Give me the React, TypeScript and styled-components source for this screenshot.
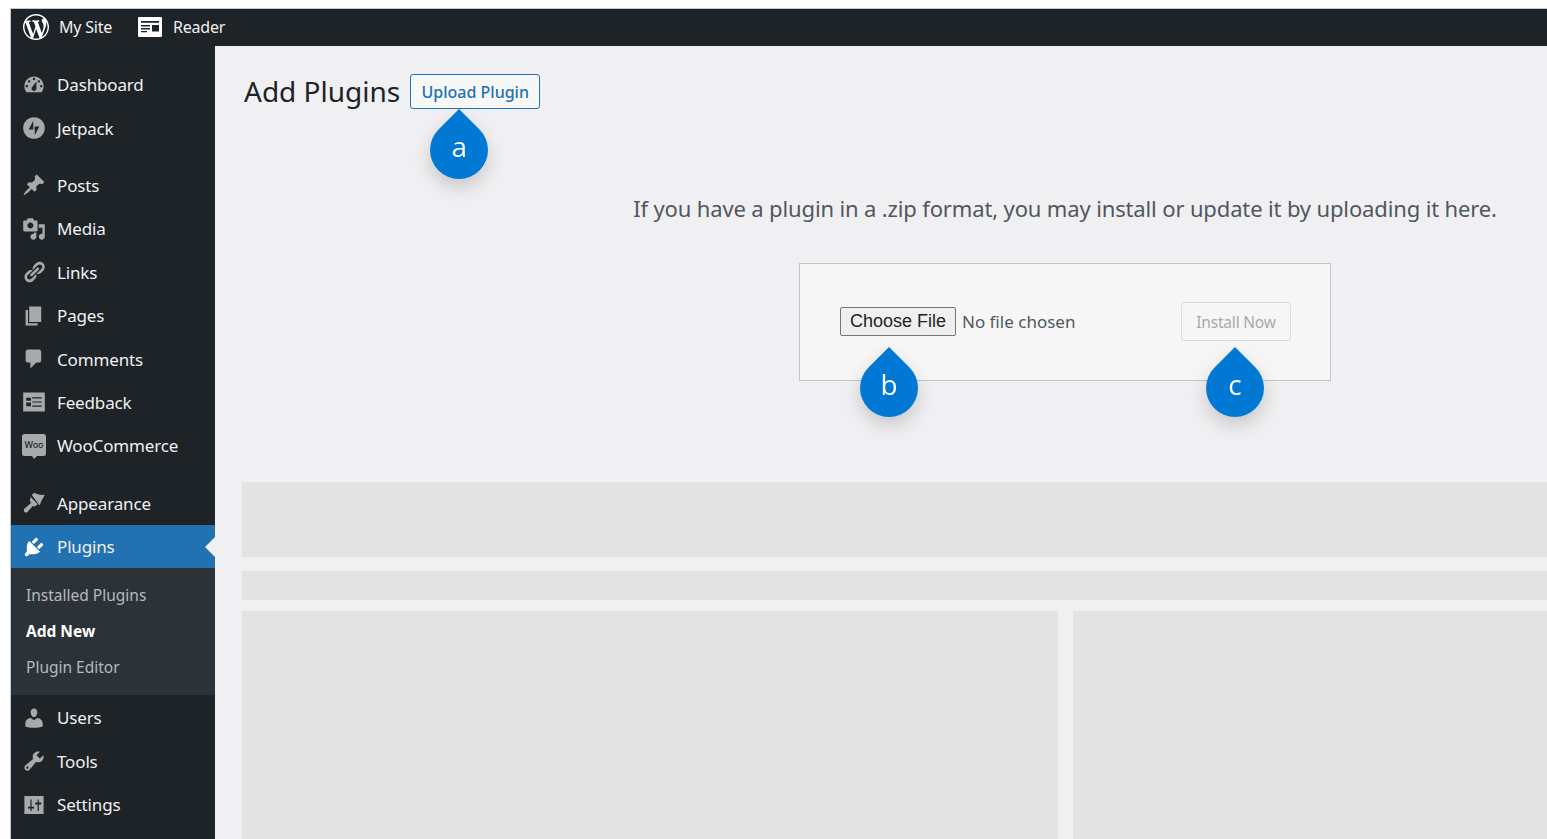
import React from "react";
import styled, { createGlobalStyle } from "styled-components";

const GlobalStyle = createGlobalStyle`
  html, body {
    margin: 0;
    height: 100%;
    background: #fff;
  }
  body {
    font-family: "Noto Sans", "Open Sans", sans-serif;
    overflow: hidden;
  }
  * {
    box-sizing: border-box;
  }
`;

const Page = styled.div`
  margin: 8px 0 0 10px;
  height: 831px;
  border-top: 1px solid #c9c9c9;
  border-left: 1px solid #c9c9c9;
  display: flex;
  flex-direction: column;
  overflow: hidden;
`;

const TopBar = styled.header`
  flex: 0 0 37px;
  background: #1d2327;
  display: flex;
  align-items: center;
  color: #f0f0f1;
  font-size: 16px;
  letter-spacing: -0.2px;
  padding: 0 0 1px 12px;
`;

const TopLink = styled.div<{ $gap: number; $width: number }>`
  display: flex;
  align-items: center;
  gap: ${(p) => p.$gap}px;
  width: ${(p) => p.$width}px;
`;

const Body = styled.div`
  flex: 1;
  display: flex;
  min-height: 0;
`;

const Sidebar = styled.nav`
  flex: 0 0 204px;
  background: #1d2327;
  padding-top: 17px;
`;

const Item = styled.div<{ $active?: boolean; $spaced?: boolean }>`
  position: relative;
  height: 43.4px;
  margin-top: ${(p) => (p.$spaced ? "14px" : "0")};
  display: flex;
  align-items: center;
  padding-left: 11px;
  gap: 11px;
  font-size: 17px;
  letter-spacing: -0.15px;
  color: #f0f0f1;
  background: ${(p) => (p.$active ? "#2271b1" : "transparent")};
  svg {
    flex: 0 0 24px;
    color: ${(p) => (p.$active ? "#fff" : "#a7aaad")};
  }
`;

const ActiveNotch = styled.span`
  position: absolute;
  right: 0;
  top: 50%;
  margin-top: -10px;
  border: 10px solid transparent;
  border-right-color: #f0f0f2;
  border-left-width: 0;
`;

const SubMenu = styled.div`
  background: #2c3338;
  padding: 9px 0 10px 15px;
  margin-bottom: 1px;
`;

const SubItem = styled.div<{ $current?: boolean }>`
  height: 36px;
  display: flex;
  align-items: center;
  font-size: 15.5px;
  color: ${(p) => (p.$current ? "#fff" : "#b4b9be")};
  font-weight: ${(p) => (p.$current ? 700 : 400)};
`;

const Main = styled.main`
  flex: 1;
  min-width: 0;
  background: #f0f0f2;
  padding: 28px 0 0 27px;
  overflow: hidden;
`;

const Heading = styled.div`
  display: flex;
  align-items: center;
  height: 35px;
  padding-left: 2px;
  gap: 10px;
`;

const Title = styled.h1`
  margin: -2px 0 0;
  font-size: 28px;
  font-weight: 400;
  color: #1d2327;
`;

const Anchor = styled.div`
  position: relative;
  display: flex;
`;

const UploadButton = styled.button`
  width: 130px;
  height: 35px;
  padding: 1px 0 0;
  background: #f6f7f7;
  border: 1px solid #2271b1;
  border-radius: 3px;
  color: #2271b1;
  font: 500 16px "Noto Sans", sans-serif;
`;

const UploadSection = styled.section`
  margin-left: 341px;
  padding-top: 84px;
  display: flex;
  flex-direction: column;
  align-items: center;
`;

const Hint = styled.p`
  margin: 0;
  font-size: 22px;
  letter-spacing: -0.14px;
  line-height: 30px;
  color: #50575e;
  white-space: nowrap;
`;

const UploadBox = styled.div`
  margin-top: 40px;
  width: 532px;
  height: 118px;
  padding: 0 39px 2px 40px;
  background: #f6f6f6;
  border: 1px solid #c3c4c7;
  display: flex;
  align-items: center;
  justify-content: space-between;
`;

const FilePicker = styled.div`
  display: flex;
  align-items: center;
  gap: 6px;
  font-size: 17px;
  color: #50575e;
`;

const ChooseButton = styled.button`
  width: 116px;
  height: 29px;
  padding: 1px 0 0;
  background: #efefef;
  border: 1px solid #767676;
  border-radius: 2px;
  color: #1d2327;
  font: 400 18px "Liberation Sans", Arial, sans-serif;
`;

const InstallButton = styled.button`
  width: 110px;
  height: 39px;
  padding: 2px 0 0;
  background: #f6f6f6;
  border: 1px solid #dcdcde;
  border-radius: 3px;
  color: #a7aaad;
  font: 400 15.5px "Noto Sans", sans-serif;
  letter-spacing: -0.2px;
`;

const Skeletons = styled.div`
  margin-top: 101px;
  display: flex;
  flex-direction: column;
`;

const Block = styled.div<{ $height: number; $mb: number }>`
  height: ${(p) => p.$height}px;
  margin-bottom: ${(p) => p.$mb}px;
  background: #e3e3e3;
`;

const Columns = styled.div`
  display: grid;
  grid-template-columns: 816px 1fr;
  gap: 15px;
  height: 300px;
`;

const Column = styled.div`
  background: #e3e3e3;
`;

const DropWrap = styled.div<{ $x: number; $top: number }>`
  position: absolute;
  left: ${(p) => p.$x}px;
  top: ${(p) => p.$top}px;
  width: 60px;
  height: 72px;
  margin-left: -30px;
  filter: drop-shadow(0 8px 9px rgba(0, 0, 0, 0.17));
  svg {
    display: block;
  }
`;

const DropLetter = styled.span`
  position: absolute;
  left: 0;
  right: 0;
  top: 18px;
  text-align: center;
  color: #fff;
  font-size: 28px;
  line-height: 40px;
  font-family: "Open Sans", "Noto Sans", sans-serif;
  font-weight: 400;
`;

const Drop = ({ letter, x, top }: { letter: string; x: number; top: number }) => (
  <DropWrap $x={x} $top={top}>
    <svg width="60" height="72" viewBox="0 0 60 72">
      <path d="M30 1 L50.5 21.5 A29 29 0 1 1 9.5 21.5 Z" fill="#0078d4" />
    </svg>
    <DropLetter>{letter}</DropLetter>
  </DropWrap>
);

type IconProps = { size?: number };

const Icon = ({ d, size = 24 }: IconProps & { d: string }) => (
  <svg width={size} height={size} viewBox="0 0 20 20" fill="currentColor">
    <path d={d} fillRule="evenodd" />
  </svg>
);

const icons = {
  dashboard:
    "M3.76 16h12.48c1.1-1.37 1.76-3.11 1.76-5 0-4.42-3.58-8-8-8s-8 3.58-8 8c0 1.89.66 3.63 1.76 5zM10 4c.55 0 1 .45 1 1s-.45 1-1 1-1-.45-1-1 .45-1 1-1zM6 6c.55 0 1 .45 1 1s-.45 1-1 1-1-.45-1-1 .45-1 1-1zm8 0c.55 0 1 .45 1 1s-.45 1-1 1-1-.45-1-1 .45-1 1-1zm-5.37 5.55L12 7v6c0 1.1-.9 2-2 2s-2-.9-2-2c0-.57.24-1.08.63-1.45zM4 10c.55 0 1 .45 1 1s-.45 1-1 1-1-.45-1-1 .45-1 1-1zm12 0c.55 0 1 .45 1 1s-.45 1-1 1-1-.45-1-1 .45-1 1-1z",
  jetpack:
    "M10 1a9 9 0 1 0 0 18 9 9 0 0 0 0-18zM9.4 4v7.2H5.6L9.4 4zm1.2 12V8.8h3.8L10.6 16z",
  posts:
    "M10.44 3.02l1.82-1.82 6.36 6.35-1.83 1.82c-1.05-.68-2.48-.57-3.41.36l-.75.75c-.92.93-1.04 2.35-.35 3.41l-1.83 1.82-2.41-2.41-2.8 2.79c-.42.42-3.38 2.71-3.8 2.29s1.86-3.39 2.28-3.81l2.79-2.79L4.1 9.36l1.83-1.82c1.05.69 2.48.57 3.4-.36l.75-.75c.93-.92 1.05-2.35.36-3.41z",
  media:
    "M13 11V4c0-.55-.45-1-1-1h-1.67L9 1H5L3.67 3H2c-.55 0-1 .45-1 1v7c0 .55.45 1 1 1h10c.55 0 1-.45 1-1zM7 4.5c1.38 0 2.5 1.12 2.5 2.5S8.38 9.5 7 9.5 4.5 8.38 4.5 7 5.62 4.5 7 4.5zM14 6h5v10.5c0 1.38-1.12 2.5-2.5 2.5S14 17.88 14 16.5s1.12-2.5 2.5-2.5c.17 0 .34.02.5.05V9h-3V6zm-4 8.05V13h2v3.5c0 1.38-1.12 2.5-2.5 2.5S7 17.88 7 16.5 8.12 14 9.5 14c.17 0 .34.02.5.05z",
  links:
    "M17.74 2.76c1.68 1.69 1.68 4.41 0 6.1l-1.53 1.52c-1.12 1.12-2.7 1.47-4.14 1.09l2.62-2.61.76-.77.76-.76c.84-.84.84-2.2 0-3.04-.84-.85-2.2-.85-3.04 0l-.77.76-3.38 3.38c-.37-1.44-.02-3.02 1.1-4.14l1.52-1.53c1.69-1.68 4.42-1.68 6.1 0zM8.59 13.43l5.34-5.34c.42-.42.42-1.1 0-1.52-.44-.43-1.13-.39-1.53 0l-5.33 5.34c-.42.42-.42 1.1 0 1.52.44.43 1.13.39 1.52 0zm-.76 2.29l4.14-4.15c.38 1.44.03 3.02-1.09 4.14l-1.52 1.53c-1.69 1.68-4.41 1.68-6.1 0-1.68-1.68-1.68-4.42 0-6.1l1.53-1.52c1.12-1.12 2.7-1.47 4.14-1.1l-4.14 4.15c-.85.84-.85 2.2 0 3.05.84.84 2.2.84 3.04 0z",
  pages: "M6 15V2h10v13H6zm-1 1h8v2H3V5h2v11z",
  comments:
    "M5 2h9c1.1 0 2 .9 2 2v7c0 1.1-.9 2-2 2h-2l-5 5v-5H5c-1.1 0-2-.9-2-2V4c0-1.1.9-2 2-2z",
  feedback:
    "M1 2h18v16H1V2zm2.500 4.500v2.500h4V6.500h-4zm0 4v3h4v-3h-4zM8.500 6v1h8V6h-8zm0 3.500v1h8v-1h-8zm0 3.500v1h8v-1h-8z",
  appearance:
    "M8.200 3.300 10 1.500c2 1 5 2 9 1.700-1.500 2.800-3 4.800-4 8.300l-.5.300-6.300-8.500zM7 4.700l6.200 6.300-2.700 2-1.500-.5-4.500 5c-1 1-3 .5-3-1.500 0-1 .5-1.500 1.500-2l4.500-4-1-2 1-3.800z",
  plugins:
    "M13.11 4.36L9.87 7.6 8 5.73l3.24-3.24c.35-.34 1.05-.2 1.56.32.52.51.66 1.21.31 1.55zm-8 1.77l.91-1.12 9.01 9.01-1.19.84c-.71.71-2.63 1.16-3.82 1.16H6.14L4.9 17.26c-.59.59-1.54.59-2.12 0-.59-.58-.59-1.53 0-2.12l1.24-1.24v-3.88c0-1.13.4-3.19 1.09-3.89zm7.26 3.97l3.24-3.24c.34-.35 1.04-.21 1.55.31.52.51.66 1.21.31 1.55l-3.24 3.25z",
  users:
    "M10 9.25c-2.27 0-2.73-3.44-2.73-3.44C7 4.02 7.82 2 9.97 2c2.16 0 2.98 2.02 2.71 3.81 0 0-.41 3.44-2.68 3.44zm0 2.57L12.72 10c2.39 0 4.52 2.33 4.52 4.53v2.49s-3.65 1.13-7.24 1.13c-3.65 0-7.24-1.13-7.24-1.13v-2.49c0-2.25 1.94-4.48 4.47-4.48z",
  tools:
    "M16.68 9.77c-1.34 1.34-3.3 1.67-4.95.99l-5.41 6.52c-.99.99-2.59.99-3.58 0s-.99-2.59 0-3.57l6.52-5.42c-.68-1.65-.35-3.61.99-4.95 1.28-1.28 3.12-1.62 4.72-1.06l-2.89 2.89 2.82 2.82 2.86-2.87c.53 1.58.18 3.39-1.08 4.65zM3.81 16.21c.4.39 1.04.39 1.43 0 .4-.4.4-1.04 0-1.43-.39-.4-1.03-.4-1.43 0-.39.39-.39 1.03 0 1.43z",
  settings:
    "M2 2.500h16v15H2v-15zM7 5.500h1v6h2V13H8v2H7v-2H5v-1.500h2v-6zM13 5.500h1V8h2v1.500h-2V15h-1V9.500h-2V8h2V5.500z",
};

const WpLogo = () => (
  <svg width="26" height="26" viewBox="0 0 20 20" fill="#fff">
    <path d="M20 10c0-5.510-4.490-10-10-10C4.480 0 0 4.490 0 10c0 5.520 4.480 10 10 10 5.510 0 10-4.480 10-10zM7.780 15.370L4.370 6.220c.55-.02 1.170-.08 1.170-.08.5-.06.44-1.130-.06-1.110 0 0-1.450.11-2.370.11-.18 0-.37 0-.58-.01C4.120 2.690 6.870 1.110 10 1.110c2.330 0 4.450.87 6.050 2.340-.68-.11-1.650.39-1.650 1.580 0 .74.45 1.360.9 2.100.35.61.55 1.360.55 2.460 0 1.490-1.400 5-1.400 5l-3.030-8.370c.54-.02.82-.17.82-.17.5-.05.44-1.250-.06-1.220 0 0-1.440.12-2.380.12-.87 0-2.330-.12-2.330-.12-.5-.03-.56 1.200-.06 1.220l.92.08 1.260 3.410zM17.410 10c.24-.64.74-1.870.43-4.250.7 1.290 1.050 2.710 1.050 4.250 0 3.290-1.730 6.240-4.400 7.780.97-2.590 1.940-5.200 2.920-7.780zM6.100 18.090C3.120 16.650 1.110 13.530 1.110 10c0-1.300.23-2.480.72-3.590C3.250 10.300 4.670 14.200 6.100 18.090zm4.030-6.630l2.580 6.980c-.86.29-1.760.45-2.710.45-.79 0-1.570-.11-2.290-.33.81-2.380 1.620-4.740 2.420-7.100z" />
  </svg>
);

const ReaderIcon = () => (
  <svg width="24" height="20" viewBox="0 0 24 20">
    <path d="M1 0h22a1 1 0 0 1 1 1v18a1 1 0 0 1-1 1H1a1 1 0 0 1-1-1V1a1 1 0 0 1 1-1z" fill="#fff" />
    <path d="M3 4h18v1.800H3zM3 8h9v1.500H3zM3 11h9v1.500H3zM3 14h6v1.300H3zM14 8h7v6.500h-7z" fill="#1d2327" />
  </svg>
);

const WooIcon = () => (
  <svg width="24" height="26" viewBox="0 0 24 26">
    <path d="M2.500 1h19A2.500 2.500 0 0 1 24 3.500v17a2.500 2.500 0 0 1-2.500 2.500H15l-3 3-2-3H2.500A2.500 2.500 0 0 1 0 20.500v-17A2.500 2.500 0 0 1 2.500 1z" fill="#a7aaad" />
    <text x="12" y="15" textAnchor="middle" fontSize="9" fontWeight="500" fontFamily="Noto Sans, sans-serif" fill="#1d2327">
      Woo
    </text>
  </svg>
);

const App = () => (
  <>
    <GlobalStyle />
    <Page>
      <TopBar>
        <TopLink $gap={10} $width={115}>
          <WpLogo />
          My Site
        </TopLink>
        <TopLink $gap={11} $width={100}>
          <ReaderIcon />
          Reader
        </TopLink>
      </TopBar>
      <Body>
        <Sidebar>
          <Item><Icon d={icons.dashboard} />Dashboard</Item>
          <Item><Icon d={icons.jetpack} />Jetpack</Item>
          <Item $spaced><Icon d={icons.posts} />Posts</Item>
          <Item><Icon d={icons.media} />Media</Item>
          <Item><Icon d={icons.links} />Links</Item>
          <Item><Icon d={icons.pages} />Pages</Item>
          <Item><Icon d={icons.comments} />Comments</Item>
          <Item><Icon d={icons.feedback} />Feedback</Item>
          <Item><WooIcon />WooCommerce</Item>
          <Item $spaced><Icon d={icons.appearance} />Appearance</Item>
          <Item $active>
            <Icon d={icons.plugins} />
            Plugins
            <ActiveNotch />
          </Item>
          <SubMenu>
            <SubItem>Installed Plugins</SubItem>
            <SubItem $current>Add New</SubItem>
            <SubItem>Plugin Editor</SubItem>
          </SubMenu>
          <Item><Icon d={icons.users} />Users</Item>
          <Item><Icon d={icons.tools} />Tools</Item>
          <Item><Icon d={icons.settings} />Settings</Item>
        </Sidebar>
        <Main>
          <Heading>
            <Title>Add Plugins</Title>
            <Anchor>
              <UploadButton>Upload Plugin</UploadButton>
              <Drop letter="a" x={49} top={34} />
            </Anchor>
          </Heading>
          <UploadSection>
            <Hint>If you have a plugin in a .zip format, you may install or update it by uploading it here.</Hint>
            <UploadBox>
              <FilePicker>
                <Anchor>
                  <ChooseButton>Choose File</ChooseButton>
                  <Drop letter="b" x={49} top={39} />
                </Anchor>
                No file chosen
              </FilePicker>
              <Anchor>
                <InstallButton disabled>Install Now</InstallButton>
                <Drop letter="c" x={54} top={44} />
              </Anchor>
            </UploadBox>
          </UploadSection>
          <Skeletons>
            <Block $height={75} $mb={14} />
            <Block $height={29} $mb={11} />
            <Columns>
              <Column />
              <Column />
            </Columns>
          </Skeletons>
        </Main>
      </Body>
    </Page>
  </>
);

export default App;
